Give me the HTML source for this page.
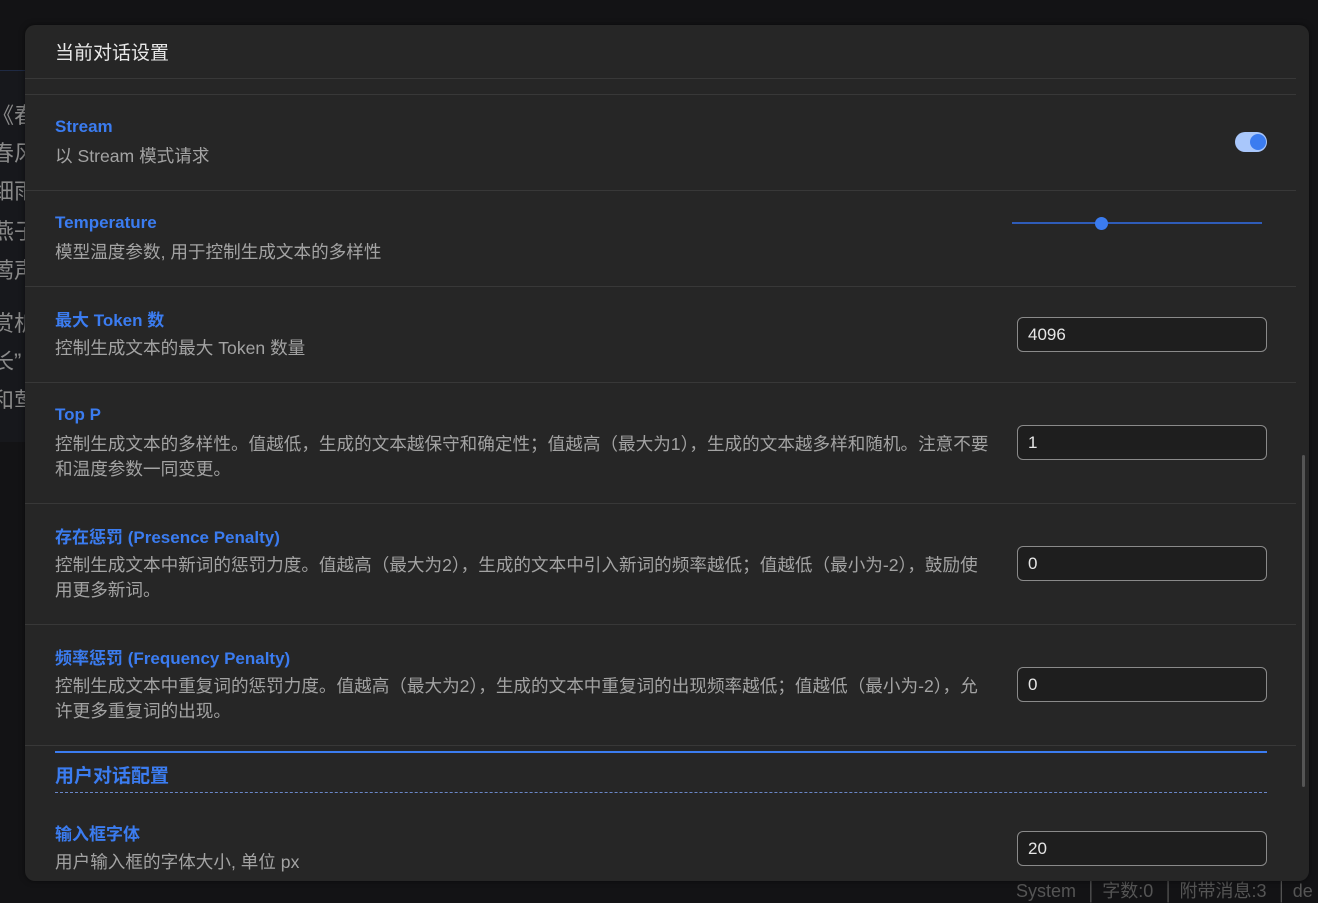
<!DOCTYPE html>
<html><head><meta charset="utf-8"><style>
*{margin:0;padding:0;box-sizing:border-box}
body{width:1318px;height:897px;background:#131315;overflow:hidden;position:relative;font-family:"Liberation Sans","Noto Sans CJK SC",sans-serif}
.bgl{position:absolute;left:0;top:70px;width:30px;height:372px;background:#17181c;border-top:1px solid #1f2a44}
.bgt{position:absolute;left:-8px;color:#8a8a8a;font-size:22px}
.modal{position:absolute;left:25px;top:25px;width:1284px;height:856px;background:#262626;border-radius:10px;overflow:hidden;box-shadow:0 0 6px rgba(0,0,0,.5)}
.a{position:absolute;white-space:nowrap}
.hr{position:absolute;left:0;width:1271px;height:1px;background:#383838}
.t{position:absolute;left:30px;color:#3b7cf0;font-weight:bold;font-size:17px}
.d{position:absolute;left:30px;color:#a3a3a3;font-size:17.6px;line-height:25px;white-space:nowrap}
.in{position:absolute;left:992px;width:250px;height:35px;border:1px solid #8a8a8a;border-radius:6px;background:#1e1e1e;color:#e6e6e6;font-size:17px;line-height:33px;padding-left:10px}
</style></head><body>
<div class="bgl"></div>
<div class="bgt" style="top:98px">《春</div>
<div class="bgt" style="top:136px">春风</div>
<div class="bgt" style="top:174px">细雨</div>
<div class="bgt" style="top:214px">燕子</div>
<div class="bgt" style="top:253px">莺声</div>
<div class="bgt" style="top:306px">赏析</div>
<div class="bgt" style="top:344px">长”</div>
<div class="bgt" style="top:383px">和莺</div>
<div class="a" style="left:1016px;top:877px;color:#555;font-size:18px">System &nbsp;│ 字数:0 &nbsp;│ 附带消息:3 &nbsp;│ de</div>
<div class="modal">
<div class="a" style="left:30px;top:13px;color:#e8e8e8;font-size:19px">当前对话设置</div>
<div class="hr" style="top:53px"></div>
<div class="hr" style="top:69px"></div>
<div class="t" style="top:92px">Stream</div>
<div class="d" style="top:119px">以 Stream 模式请求</div>
<div class="a" style="left:1210px;top:107px;width:32px;height:20px;border-radius:10px;background:#a9c7fb"></div>
<div class="a" style="left:1225px;top:109px;width:16px;height:16px;border-radius:8px;background:#3b7cf0"></div>
<div class="hr" style="top:165px"></div>
<div class="t" style="top:188px">Temperature</div>
<div class="d" style="top:215px">模型温度参数, 用于控制生成文本的多样性</div>
<div class="a" style="left:987px;top:197px;width:250px;height:2px;background:#2f5cb8"></div>
<div class="a" style="left:1070px;top:192px;width:13px;height:13px;border-radius:7px;background:#3b7cf0"></div>
<div class="hr" style="top:261px"></div>
<div class="t" style="top:281px">最大 Token 数</div>
<div class="d" style="top:311px">控制生成文本的最大 Token 数量</div>
<div class="in" style="top:292px">4096</div>
<div class="hr" style="top:357px"></div>
<div class="t" style="top:380px">Top P</div>
<div class="d" style="top:407px">控制生成文本的多样性。值越低，生成的文本越保守和确定性；值越高（最大为1），生成的文本越多样和随机。注意不要<br>和温度参数一同变更。</div>
<div class="in" style="top:400px">1</div>
<div class="hr" style="top:478px"></div>
<div class="t" style="top:498px">存在惩罚 (Presence Penalty)</div>
<div class="d" style="top:528px">控制生成文本中新词的惩罚力度。值越高（最大为2），生成的文本中引入新词的频率越低；值越低（最小为-2），鼓励使<br>用更多新词。</div>
<div class="in" style="top:521px">0</div>
<div class="hr" style="top:599px"></div>
<div class="t" style="top:619px">频率惩罚 (Frequency Penalty)</div>
<div class="d" style="top:649px">控制生成文本中重复词的惩罚力度。值越高（最大为2），生成的文本中重复词的出现频率越低；值越低（最小为-2），允<br>许更多重复词的出现。</div>
<div class="in" style="top:642px">0</div>
<div class="hr" style="top:720px"></div>
<div class="a" style="left:30px;top:726px;width:1212px;height:2px;background:#3b7cf0"></div>
<div class="a" style="left:30px;top:736px;color:#3b7cf0;font-weight:bold;font-size:19px">用户对话配置</div>
<div class="a" style="left:30px;top:767px;width:1212px;border-top:1px dashed #6a87c8"></div>
<div class="t" style="top:795px">输入框字体</div>
<div class="d" style="top:825px">用户输入框的字体大小, 单位 px</div>
<div class="in" style="top:806px">20</div>
<div class="a" style="left:1277px;top:430px;width:3px;height:332px;background:#555;border-radius:2px"></div>
</div>
</body></html>
